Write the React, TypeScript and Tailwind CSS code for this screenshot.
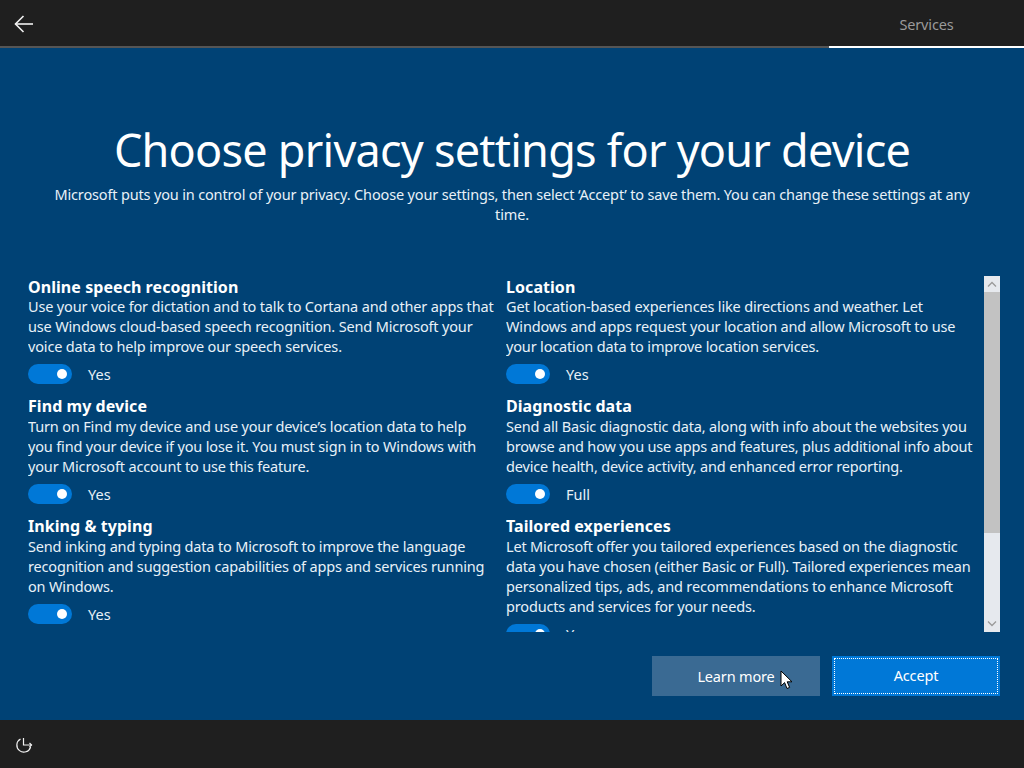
const font = { fontFamily: '"Noto Sans", sans-serif' };

type Item = { title: string; lines: string[]; state: string };

const left: Item[] = [
  {
    title: "Online speech recognition",
    lines: [
      "Use your voice for dictation and to talk to Cortana and other apps that",
      "use Windows cloud-based speech recognition. Send Microsoft your",
      "voice data to help improve our speech services.",
    ],
    state: "Yes",
  },
  {
    title: "Find my device",
    lines: [
      "Turn on Find my device and use your device’s location data to help",
      "you find your device if you lose it. You must sign in to Windows with",
      "your Microsoft account to use this feature.",
    ],
    state: "Yes",
  },
  {
    title: "Inking & typing",
    lines: [
      "Send inking and typing data to Microsoft to improve the language",
      "recognition and suggestion capabilities of apps and services running",
      "on Windows.",
    ],
    state: "Yes",
  },
];

const right: Item[] = [
  {
    title: "Location",
    lines: [
      "Get location-based experiences like directions and weather. Let",
      "Windows and apps request your location and allow Microsoft to use",
      "your location data to improve location services.",
    ],
    state: "Yes",
  },
  {
    title: "Diagnostic data",
    lines: [
      "Send all Basic diagnostic data, along with info about the websites you",
      "browse and how you use apps and features, plus additional info about",
      "device health, device activity, and enhanced error reporting.",
    ],
    state: "Full",
  },
  {
    title: "Tailored experiences",
    lines: [
      "Let Microsoft offer you tailored experiences based on the diagnostic",
      "data you have chosen (either Basic or Full). Tailored experiences mean",
      "personalized tips, ads, and recommendations to enhance Microsoft",
      "products and services for your needs.",
    ],
    state: "Yes",
  },
];

function Setting({ item }: { item: Item }) {
  return (
    <div className="h-[119.75px] shrink-0">
      <div className="text-[16px] leading-[20px] font-bold text-white whitespace-nowrap tracking-[0.06px]">
        {item.title}
      </div>
      <div className="-mt-[0.6px]">
        {item.lines.map((l) => (
          <div key={l} className="text-[14.5px] leading-[20px] text-[#e8f1f8] whitespace-nowrap tracking-[-0.165px]">
            {l}
          </div>
        ))}
      </div>
      <div className="flex items-center mt-[8.2px] h-[20px]">
        <div className="w-[44px] h-[20px] rounded-full bg-[#0078d7] flex items-center justify-end pr-[5px]">
          <div className="w-[10px] h-[10px] rounded-full bg-white" />
        </div>
        <span className="ml-[16px] text-[14.5px] leading-[20px] text-[#e8f1f8]">{item.state}</span>
      </div>
    </div>
  );
}

export default function App() {
  return (
    <div className="w-[1024px] h-[768px] flex flex-col overflow-hidden bg-[#004275]" style={font}>
      <header className="h-[48px] shrink-0 bg-[#1f1f1f] flex justify-between relative">
        <div className="w-[48px] h-[46px] flex items-center justify-center pt-[1px]">
          <svg width="20" height="18" viewBox="0 0 20 18" fill="none" stroke="#f2f2f2" strokeWidth="1.6">
            <path d="M1.5 9H19" />
            <path d="M9.5 1L1.5 9L9.5 17" />
          </svg>
        </div>
        <div className="w-[195px] h-[46px] flex items-center justify-center text-[14.5px] text-[#9a9a9a] tracking-[-0.16px] pt-[3px]">
          Services
        </div>
        <div className="absolute left-0 right-[195px] bottom-0 h-[2px] bg-[#555555]" />
        <div className="absolute right-0 w-[195px] bottom-0 h-[2px] bg-white" />
      </header>

      <main className="flex-1 flex flex-col min-h-0">
        <h1 className="mt-[72px] text-center text-[45px] leading-[60px] text-white font-normal tracking-[-0.77px]">
          Choose privacy settings for your device
        </h1>
        <p className="mt-[4px] text-center text-[14.5px] leading-[20px] text-[#e8f1f8] tracking-[-0.16px]">
          Microsoft puts you in control of your privacy. Choose your settings, then select ‘Accept’ to save them. You can change these settings at any
          <br />
          time.
        </p>

        <div className="mt-[52px] h-[356px] flex pl-[28px] pr-[24px] shrink-0">
          <div className="w-[478px] h-full overflow-hidden flex flex-col pt-[0.6px]">
            {left.map((i) => (
              <Setting key={i.title} item={i} />
            ))}
          </div>
          <div className="w-[478px] h-full overflow-hidden flex flex-col pt-[0.6px]">
            {right.map((i) => (
              <Setting key={i.title} item={i} />
            ))}
          </div>
          <div className="w-[16px] h-full flex flex-col bg-[#e6e9ee]">
            <div className="h-[16px] flex items-center justify-center">
              <svg width="10" height="6" viewBox="0 0 10 6" fill="none" stroke="#9a9a9a" strokeWidth="1.3">
                <path d="M1 5.5L5 1.5L9 5.5" />
              </svg>
            </div>
            <div className="h-[241px] bg-[#c2c2c2]" />
            <div className="flex-1" />
            <div className="h-[16px] flex items-center justify-center">
              <svg width="10" height="6" viewBox="0 0 10 6" fill="none" stroke="#9a9a9a" strokeWidth="1.3">
                <path d="M1 .5L5 4.5L9 .5" />
              </svg>
            </div>
          </div>
        </div>

        <div className="mt-[24px] flex justify-end gap-[12px] pr-[24px]">
          <button className="relative w-[168px] h-[40px] bg-[#3a6a93] text-white text-[14.5px] tracking-[-0.16px] pt-[1px]">
            Learn more
            <svg className="absolute left-[128px] top-[14px]" width="13" height="20" viewBox="0 0 13 20">
              <path d="M1 1V16L4.6 12.6L7 18.5L9.6 17.4L7.2 11.8H12Z" fill="#fff" stroke="#000" strokeWidth="1" />
            </svg>
          </button>
          <button className="w-[168px] h-[40px] bg-[#0078d7] text-white text-[14.5px] tracking-[-0.16px] p-[2px]">
            <span className="w-full h-full flex items-center justify-center border border-dotted border-white">Accept</span>
          </button>
        </div>
      </main>

      <footer className="h-[48px] shrink-0 bg-[#1f1f1f] flex items-center pl-[15px] pt-[2px]">
        <svg width="18" height="18" viewBox="0 0 18 18" fill="none" stroke="#f2f2f2" strokeWidth="1.2">
          <path d="M15.6 11A7 7 0 1 1 5.5 3" />
          <path d="M8.5 2V9H16.5" />
          <path d="M14.5 7L16.5 9L14.5 11" />
        </svg>
      </footer>
    </div>
  );
}
